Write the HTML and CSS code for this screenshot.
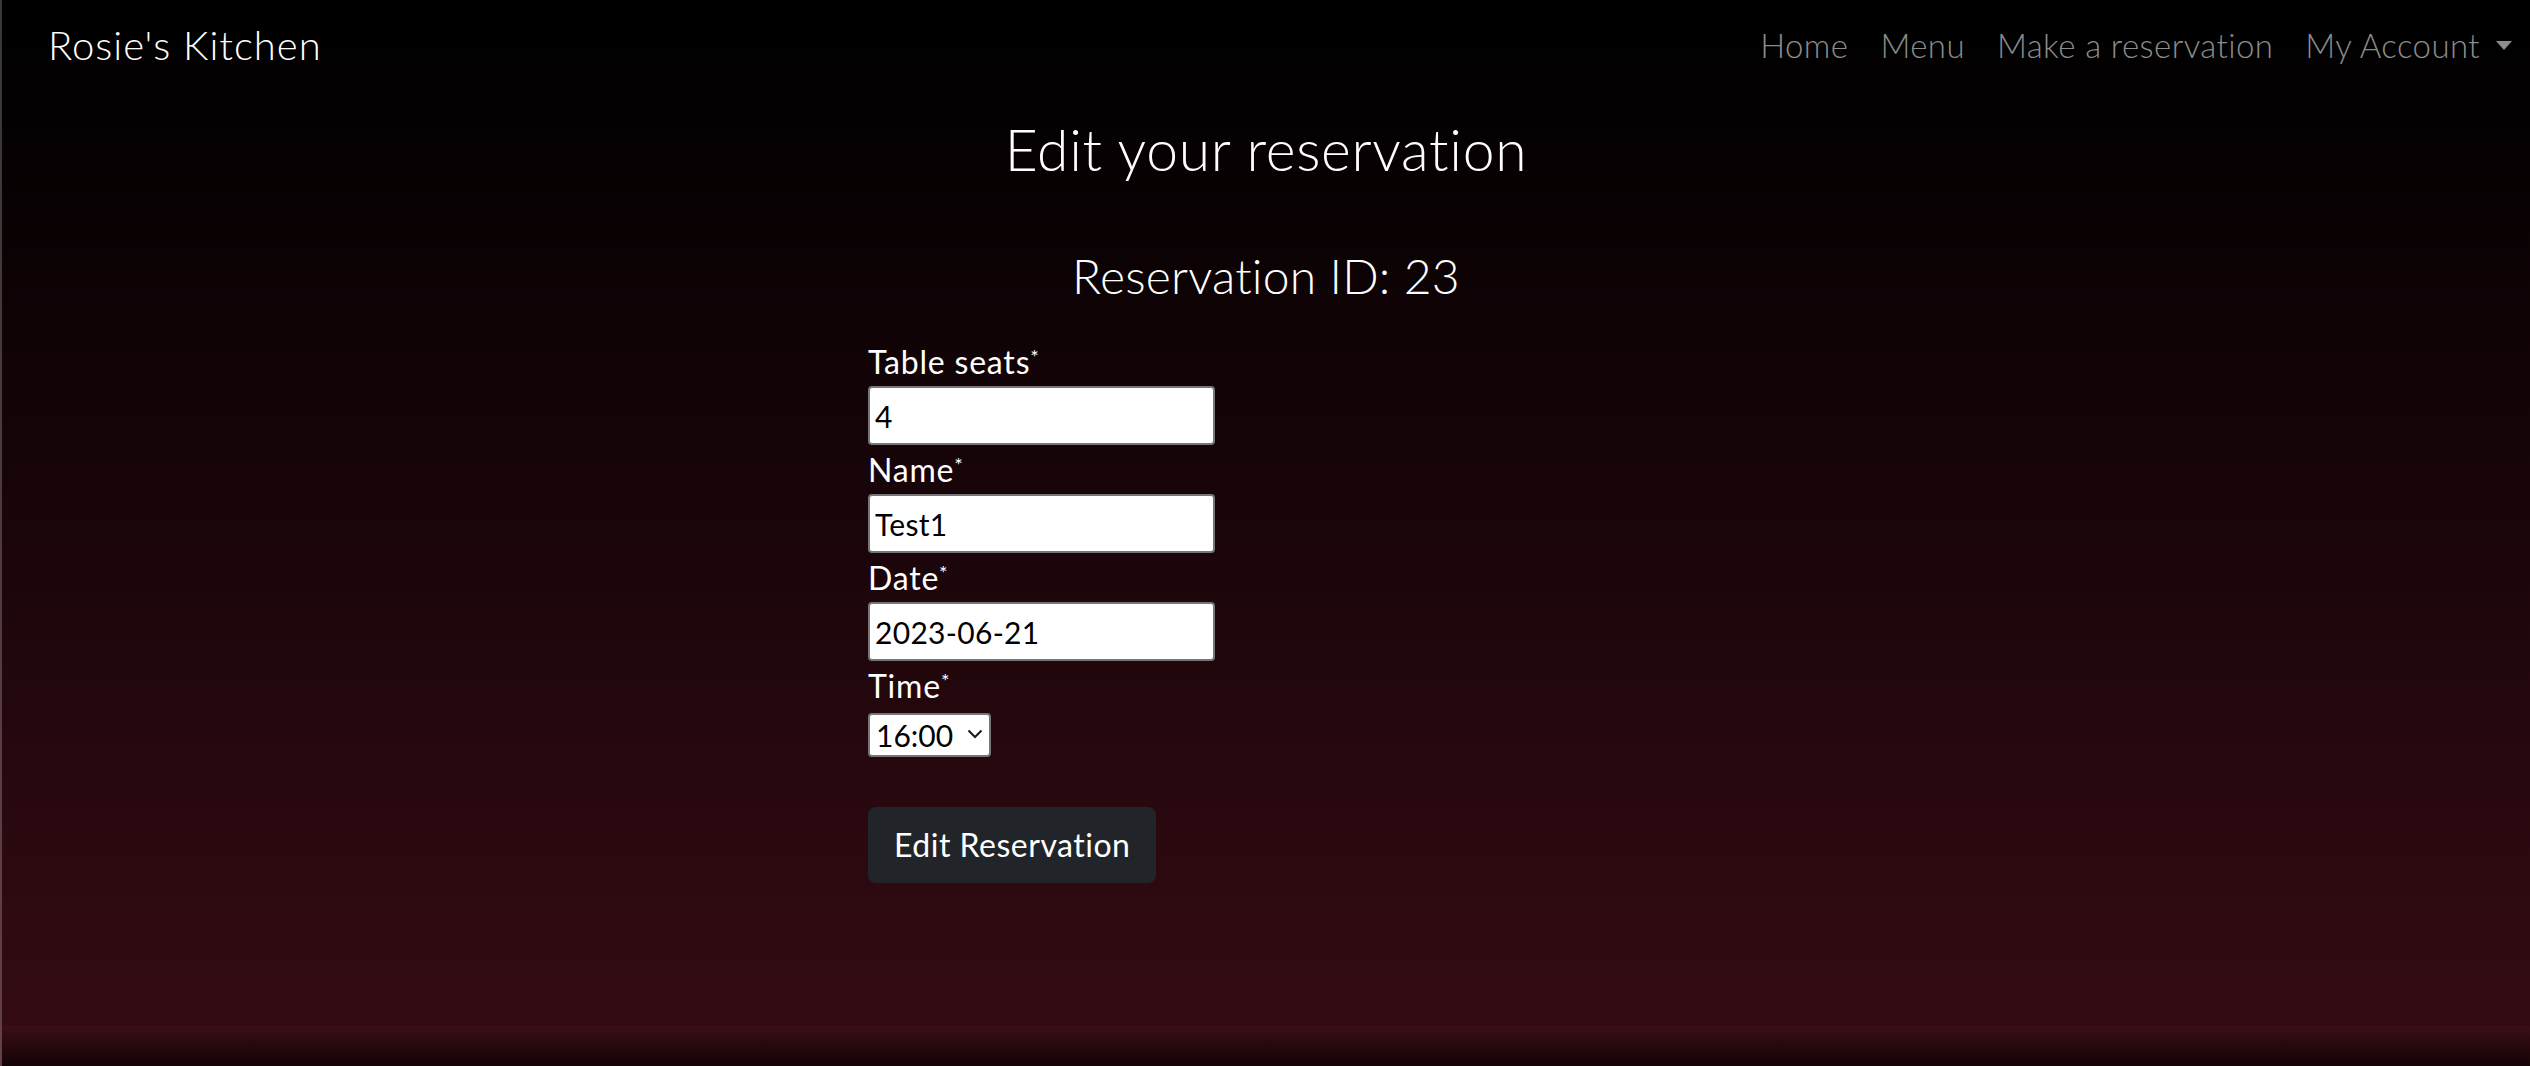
FILE: index.html
```html
<!DOCTYPE html>
<html lang="en">
<head>
<meta charset="utf-8">
<title>Rosie's Kitchen - Edit reservation</title>
<link rel="stylesheet" href="styles.css">
</head>
<body>
<div class="page">
  <nav class="navbar">
    <a class="brand" href="#">Rosie's Kitchen</a>
    <ul class="nav-links">
      <li><a href="#">Home</a></li>
      <li><a href="#">Menu</a></li>
      <li><a href="#">Make a reservation</a></li>
      <li><a href="#" class="dropdown">My Account<span class="caret"></span></a></li>
    </ul>
  </nav>
  <main class="content">
    <h1 class="title">Edit your reservation</h1>
    <h2 class="subtitle">Reservation ID: 23</h2>
    <form class="form">
      <label class="field-label" for="seats">Table seats<span class="req">*</span></label>
      <input class="field-input" id="seats" type="text" value="4">
      <label class="field-label" for="name">Name<span class="req">*</span></label>
      <input class="field-input" id="name" type="text" value="Test1">
      <label class="field-label" for="date">Date<span class="req">*</span></label>
      <input class="field-input" id="date" type="text" value="2023-06-21">
      <label class="field-label" for="time">Time<span class="req">*</span></label>
      <div class="select-wrap">
        <select class="field-select" id="time"><option>16:00</option></select>
        <svg class="chevron" width="16" height="10" viewBox="0 0 16 10"><path d="M1.5 1.5 L8 8 L14.5 1.5" fill="none" stroke="#1a1a1a" stroke-width="2"/></svg>
      </div>
      <button class="btn" type="button">Edit Reservation</button>
    </form>
  </main>
  <footer class="footer"></footer>
</div>
</body>
</html>
```

FILE: styles.css
```css
html, body {
  margin: 0;
  padding: 0;
}

body {
  font-family: Lato, "Liberation Sans", sans-serif;
  color: #fff;
  background: #000;
}

.page {
  box-sizing: border-box;
  min-height: 1066px;
  border-left: 2px solid rgba(255, 255, 255, 0.22);
  display: flex;
  flex-direction: column;
  background: linear-gradient(180deg, #000 0px, #030001 90px, #340b13 1026px);
}

.navbar {
  display: flex;
  justify-content: space-between;
  align-items: center;
  padding: 15px 2px 16px 46px;
}

.brand {
  font-size: 40px;
  line-height: 60px;
  font-weight: 300;
  color: #fff;
  text-decoration: none;
  letter-spacing: 1px;
}

.nav-links {
  display: flex;
  list-style: none;
  margin: 0;
  padding: 0;
}

.nav-links a {
  display: flex;
  align-items: center;
  padding: 0 16px;
  font-size: 33px;
  line-height: 48px;
  font-weight: 300;
  color: #8c8c8c;
  text-decoration: none;
  letter-spacing: 0.4px;
}

.caret {
  display: inline-block;
  width: 0;
  height: 0;
  margin-left: 16px;
  border-top: 9px solid #8c8c8c;
  border-left: 8px solid transparent;
  border-right: 8px solid transparent;
}

.content {
  flex: 1;
  display: flex;
  flex-direction: column;
  align-items: center;
  padding-top: 24px;
}

.title {
  margin: 0;
  font-size: 57px;
  line-height: 68px;
  font-weight: 300;
  letter-spacing: 0.7px;
}

.subtitle {
  margin: 64px 0 0;
  font-size: 48px;
  line-height: 58px;
  font-weight: 300;
  letter-spacing: 0.2px;
}

.form {
  width: 796px;
  margin-top: 33px;
  display: flex;
  flex-direction: column;
  align-items: flex-start;
}

.field-label {
  display: block;
  font-size: 32px;
  line-height: 48px;
  font-weight: 400;
  letter-spacing: 0.8px;
}

.req {
  font-size: 20px;
  vertical-align: 10px;
  line-height: 0;
}

.field-input {
  box-sizing: border-box;
  width: 347px;
  height: 59px;
  margin: 0 0 1px;
  padding: 0 5px;
  border: 2px solid #767676;
  border-radius: 4px;
  background: #fff;
  color: #000;
  font-family: Lato, "Liberation Sans", sans-serif;
  font-size: 30px;
  font-weight: 400;
  letter-spacing: 0.3px;
}

.select-wrap {
  position: relative;
  margin-top: 3px;
}

.field-select {
  box-sizing: border-box;
  width: 123px;
  height: 44px;
  padding: 0 0 0 6px;
  border: 2px solid #767676;
  border-radius: 4px;
  background: #fff;
  color: #000;
  font-family: Lato, "Liberation Sans", sans-serif;
  font-size: 30px;
  -webkit-appearance: none;
  appearance: none;
  display: block;
}

.chevron {
  position: absolute;
  right: 8px;
  top: 16px;
  pointer-events: none;
}

.btn {
  margin-top: 50px;
  padding: 12px 24px;
  border: 2px solid #212529;
  border-radius: 8px;
  background: #212529;
  color: #fff;
  font-family: Lato, "Liberation Sans", sans-serif;
  font-size: 32px;
  line-height: 48px;
  font-weight: 400;
  letter-spacing: 0.5px;
}

.footer {
  height: 40px;
  background: linear-gradient(180deg, #3d0e18 0px, #2c0910 14px, #140405 40px);
}
```
